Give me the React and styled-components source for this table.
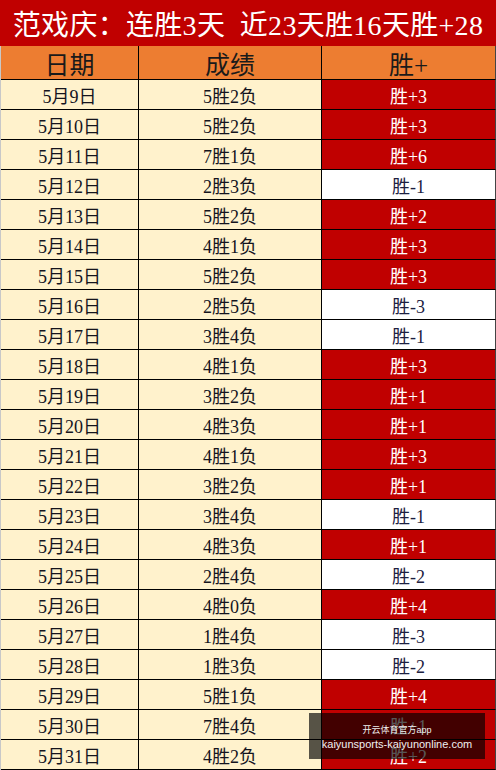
import React from 'react';
import styled, { createGlobalStyle } from 'styled-components';

const GlobalStyle = createGlobalStyle`
  html, body {
    margin: 0;
    padding: 0;
    background: #fff;
  }
  body {
    width: 496px;
    height: 770px;
    overflow: hidden;
    font-family: "Liberation Serif", "Noto Sans CJK SC", serif;
  }
`;

const Sheet = styled.div`
  position: relative;
  width: 496px;
  height: 770px;
  overflow: hidden;
`;

const Title = styled.div`
  height: 46px;
  background: #c00000;
  color: #fff;
  font-size: 28px;
  display: flex;
  align-items: center;
  justify-content: center;
  white-space: nowrap;
  letter-spacing: 0.3px;
`;

const Grid = styled.div`
  display: grid;
  grid-template-columns: 138px 183px 174px;
  border-left: 1px solid #c8c8c8;
`;

const Cell = styled.div`
  height: ${({ $head }) => ($head ? '33px' : '29px')};
  border-bottom: 1px solid #000;
  border-right: 1px solid ${({ $last }) => ($last ? '#444' : '#000')};
  background: ${({ $bg }) => $bg};
  color: ${({ $color }) => $color};
  font-size: ${({ $head }) => ($head ? '25px' : '18px')};
  display: flex;
  align-items: center;
  justify-content: center;
  white-space: nowrap;
`;

const Watermark = styled.div`
  position: absolute;
  left: 309px;
  top: 713px;
  width: 176px;
  height: 46px;
  background: rgba(0, 0, 0, 0.66);
  color: #f0f0f0;
  font-family: "Liberation Sans", "Noto Sans CJK SC", sans-serif;
  display: flex;
  flex-direction: column;
  align-items: center;
  justify-content: center;
  gap: 2px;
`;

const MarkTop = styled.span`
  font-size: 9px;
`;

const MarkBottom = styled.span`
  font-size: 11px;
`;

const rows = [
  ['5月9日', '5胜2负', 3],
  ['5月10日', '5胜2负', 3],
  ['5月11日', '7胜1负', 6],
  ['5月12日', '2胜3负', -1],
  ['5月13日', '5胜2负', 2],
  ['5月14日', '4胜1负', 3],
  ['5月15日', '5胜2负', 3],
  ['5月16日', '2胜5负', -3],
  ['5月17日', '3胜4负', -1],
  ['5月18日', '4胜1负', 3],
  ['5月19日', '3胜2负', 1],
  ['5月20日', '4胜3负', 1],
  ['5月21日', '4胜1负', 3],
  ['5月22日', '3胜2负', 1],
  ['5月23日', '3胜4负', -1],
  ['5月24日', '4胜3负', 1],
  ['5月25日', '2胜4负', -2],
  ['5月26日', '4胜0负', 4],
  ['5月27日', '1胜4负', -3],
  ['5月28日', '1胜3负', -2],
  ['5月29日', '5胜1负', 4],
  ['5月30日', '7胜4负', 1],
  ['5月31日', '4胜2负', 2],
];

const CREAM = '#fff2cc';
const ORANGE = '#ed7d31';
const RED = '#c00000';

export default function App() {
  return (
    <Sheet>
      <GlobalStyle />
      <Title>范戏庆：连胜3天&nbsp;&nbsp;近23天胜16天胜+28</Title>
      <Grid>
        <Cell $head $bg={ORANGE} $color="#1a1a1a">日期</Cell>
        <Cell $head $bg={ORANGE} $color="#1a1a1a">成绩</Cell>
        <Cell $head $last $bg={ORANGE} $color="#1a1a1a">胜+</Cell>
        {rows.map(([date, record, score]) => (
          <React.Fragment key={date}>
            <Cell $bg={CREAM} $color="#14141e">{date}</Cell>
            <Cell $bg={CREAM} $color="#14141e">{record}</Cell>
            <Cell $last $bg={score > 0 ? RED : '#fff'} $color={score > 0 ? '#fff' : '#1c2040'}>
              {score > 0 ? `胜+${score}` : `胜-${-score}`}
            </Cell>
          </React.Fragment>
        ))}
      </Grid>
      <Watermark>
        <MarkTop>开云体育官方app</MarkTop>
        <MarkBottom>kaiyunsports-kaiyunonline.com</MarkBottom>
      </Watermark>
    </Sheet>
  );
}
